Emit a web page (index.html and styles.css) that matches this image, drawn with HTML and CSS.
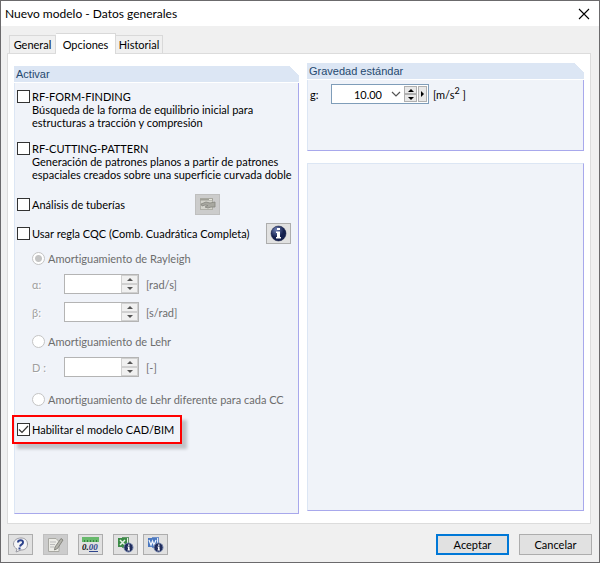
FILE: index.html
```html
<!DOCTYPE html>
<html lang="es">
<head>
    <meta charset="UTF-8">
    <meta name="viewport" content="width=device-width, initial-scale=1.0">
    <title>Nuevo modelo - Datos generales</title>
    <link rel="stylesheet" href="styles.css">
</head>
<body>
    <div class="dialog">
        <!-- Barra de título -->
        <header class="titlebar">
            <h1>Nuevo modelo - Datos generales</h1>
            <button type="button" class="close" aria-label="Cerrar">
                <svg width="12" height="12" viewBox="0 0 12 12"><path d="M1 1 L11 11 M11 1 L1 11" stroke="#000" stroke-width="1.1" fill="none"/></svg>
            </button>
        </header>

        <!-- Pestañas -->
        <nav class="tabs">
            <button type="button" class="tab">General</button>
            <button type="button" class="tab active">Opciones</button>
            <button type="button" class="tab">Historial</button>
        </nav>

        <main class="panel">
            <section class="group left">
                <h2>Activar</h2>
                <div class="group-body">
                    <label class="check">
                        <input type="checkbox">
                        <span>RF-FORM-FINDING<br>Búsqueda de la forma de equilibrio inicial para<br>estructuras a tracción y compresión</span>
                    </label>
                    <label class="check gap-m">
                        <input type="checkbox">
                        <span>RF-CUTTING-PATTERN<br>Generación de patrones planos a partir de patrones<br>espaciales creados sobre una superficie curvada doble</span>
                    </label>
                    <div class="option gap-m">
                        <label class="check"><input type="checkbox"><span>Análisis de tuberías</span></label>
                        <button type="button" class="icon-btn pipes" disabled aria-label="Editar tuberías">
                            <svg width="17" height="15" viewBox="0 0 17 15">
                                <rect x="1.5" y="1.5" width="12" height="11" fill="#d4d4cc" stroke="#b0b0a8"/>
                                <path d="M1 2.5H14" stroke="#a0a098" stroke-width="2"/>
                                <path d="M10 2.5H13" stroke="#e4e4dc"/>
                                <path d="M2 7 L7 5 L11 6 L16 5 V10 L12 10 L9 11 L6 10 L9 8.5 L6 8 L3 9 Z" fill="#a8a8a0" stroke="#85857d" stroke-width=".8"/>
                            </svg>
                        </button>
                    </div>
                    <div class="option gap-s">
                        <label class="check"><input type="checkbox"><span>Usar regla CQC (Comb. Cuadrática Completa)</span></label>
                        <button type="button" class="icon-btn" aria-label="Información">
                            <svg width="17" height="17" viewBox="0 0 17 17">
                                <defs><radialGradient id="ball" cx="35%" cy="25%"><stop offset="0" stop-color="#6f80b4"/><stop offset="1" stop-color="#14204f"/></radialGradient></defs>
                                <circle cx="8.5" cy="8.5" r="7.5" fill="url(#ball)" stroke="#0c143a" stroke-width=".5"/>
                                <path d="M7 3h3v2H7z M6 6.5h4V12h1v1.5H6V12h1V8H6z" fill="#fff"/>
                            </svg>
                        </button>
                    </div>

                    <!-- Amortiguamiento -->
                    <div class="damping">
                        <label class="radio gap-s"><input type="radio" name="damping" checked disabled><span>Amortiguamiento de Rayleigh</span></label>
                        <div class="field gap-s">
                            <label for="alpha">α:</label>
                            <span class="spin">
                                <input type="text" id="alpha" disabled>
                                <span class="arrows"><button type="button" class="up" disabled aria-label="Más"></button><button type="button" class="down" disabled aria-label="Menos"></button></span>
                            </span>
                            <span class="unit">[rad/s]</span>
                        </div>
                        <div class="field gap-s">
                            <label for="beta">β:</label>
                            <span class="spin">
                                <input type="text" id="beta" disabled>
                                <span class="arrows"><button type="button" class="up" disabled aria-label="Más"></button><button type="button" class="down" disabled aria-label="Menos"></button></span>
                            </span>
                            <span class="unit">[s/rad]</span>
                        </div>
                        <label class="radio gap-m"><input type="radio" name="damping" disabled><span>Amortiguamiento de Lehr</span></label>
                        <div class="field gap-s">
                            <label for="lehr">D :</label>
                            <span class="spin">
                                <input type="text" id="lehr" disabled>
                                <span class="arrows"><button type="button" class="up" disabled aria-label="Más"></button><button type="button" class="down" disabled aria-label="Menos"></button></span>
                            </span>
                            <span class="unit">[-]</span>
                        </div>
                        <label class="radio gap-l"><input type="radio" name="damping" disabled><span>Amortiguamiento de Lehr diferente para cada CC</span></label>
                    </div>

                    <label class="check highlight gap-l"><input type="checkbox" checked><span>Habilitar el modelo CAD/BIM</span></label>
                </div>
            </section>

            <div class="right">
                <section class="group gravity">
                    <h2>Gravedad estándar</h2>
                    <div class="group-body">
                        <label for="gravity">g:</label>
                        <span class="combo">
                            <input type="text" id="gravity" value="10.00">
                            <button type="button" class="drop" aria-label="Lista">
                                <svg width="10" height="6" viewBox="0 0 10 6"><path d="M1 1 L5 5 L9 1" stroke="#555" stroke-width="1.2" fill="none"/></svg>
                            </button>
                            <span class="arrows"><button type="button" class="up" aria-label="Más"></button><button type="button" class="down" aria-label="Menos"></button></span>
                            <button type="button" class="next" aria-label="Siguiente"></button>
                        </span>
                        <span>[m/s<sup>2</sup> ]</span>
                    </div>
                </section>
                <section class="group empty"></section>
            </div>
        </main>

        <!-- Barra inferior -->
        <footer class="footer">
            <button type="button" class="icon-btn help" aria-label="Ayuda">
                <svg width="17" height="16" viewBox="0 0 17 16">
                    <path d="M9 1 C13 1 15.5 3.5 15.5 7 C15.5 11 13 13 9 13 L4 15 L5 12 C3 11 1.5 9.5 1.5 7 C1.5 3.5 5 1 9 1Z" fill="#f4f4f6" stroke="#9a9aa2"/>
                    <path d="M6 5.5 C6 2.5 11.5 2.5 11 5.5 C11 7.5 8.5 7 8 9.5 M7.5 10.5V12.5" stroke="#2c428c" stroke-width="2" fill="none"/>
                </svg>
            </button>
            <button type="button" class="icon-btn edit" disabled aria-label="Comentario">
                <svg width="17" height="16" viewBox="0 0 17 16">
                    <path d="M1.5 1.5H9L12 4.5V14.5H1.5Z" fill="#ecece6" stroke="#a8a8a2"/>
                    <path d="M3 5H9M3 7.5H8M3 10H7" stroke="#bbb"/>
                    <path d="M14 1.5L16 3L10.5 11.5L7.5 13L8 10Z" fill="#b4b4ac" stroke="#777770" stroke-width=".8"/>
                </svg>
            </button>
            <button type="button" class="icon-btn units" aria-label="Unidades">
                <svg width="17" height="17" viewBox="0 0 17 17">
                    <path d="M0 1H17V6H0Z" fill="#68b96c"/>
                    <path d="M2.5 4V6M5.5 4V6M8.5 4V6M11.5 4V6M14.5 4V6" stroke="#378440"/>
                    <text x="0" y="14" class="digits">0.<tspan class="blue">00</tspan></text>
                    <path d="M7 15.5H16" stroke="#2f458c"/>
                </svg>
            </button>
            <button type="button" class="icon-btn excel" aria-label="Exportar a Excel">
                <svg width="17" height="17" viewBox="0 0 17 17">
                    <rect x="5.5" y="1.5" width="6" height="10" fill="#e9f1e6" stroke="#62986a"/>
                    <rect x="1" y="2" width="9" height="9" fill="#3c8b47"/>
                    <path d="M3 4L8 9M8 4L3 9" stroke="#e6f4e6" stroke-width="1.5"/>
                    <circle cx="11.5" cy="11.5" r="4.5" fill="#202c5c" stroke="#7080a8"/>
                    <path d="M11 8.5h1.5v1.2h-1.5z M10.500 10.5h2v3h.5v1h-2.500v-1h.5v-2h-.5z" fill="#fff"/>
                </svg>
            </button>
            <button type="button" class="icon-btn word" aria-label="Exportar a Word">
                <svg width="17" height="17" viewBox="0 0 17 17">
                    <rect x="5.5" y="1.5" width="6" height="10" fill="#e5ecf8" stroke="#7090c8"/>
                    <rect x="1" y="2" width="9" height="9" fill="#4a78c0"/>
                    <path d="M2 4L4 9L5.5 5L7 9L9 4" stroke="#f0f4fc" stroke-width="1.2" fill="none"/>
                    <circle cx="11.5" cy="11.5" r="4.5" fill="#202c5c" stroke="#7080a8"/>
                    <path d="M11 8.5h1.5v1.2h-1.5z M10.500 10.5h2v3h.5v1h-2.500v-1h.5v-2h-.5z" fill="#fff"/>
                </svg>
            </button>
            <button type="button" class="btn primary">Aceptar</button>
            <button type="button" class="btn">Cancelar</button>
        </footer>
    </div>
</body>
</html>
```
FILE: styles.css
```css
* {
    box-sizing: border-box;
}
body {
    margin: 0;
    font-family: Lato, "Liberation Sans", sans-serif;
    font-size: 11px;
    line-height: 13px;
    font-variant-ligatures: none;
    color: #000;
}
button, input {
    font: inherit;
    color: inherit;
    margin: 0;
    padding: 0;
}
h1, h2 {
    margin: 0;
    font-weight: normal;
}
svg {
    display: block;
}
.dialog {
    display: flex;
    flex-direction: column;
    min-height: 100vh;
    background: #f0f0f0;
    border: 1px solid #6b6a6c;
}
.titlebar {
    display: flex;
    justify-content: space-between;
    align-items: center;
    height: 25px;
    padding: 0 9px 0 4px;
    background: #fff;
}
.titlebar h1 {
    font-size: 12px;
    line-height: 16px;
}
.close {
    border: none;
    background: none;
}

/* Pestañas */
.tabs {
    display: flex;
    align-items: flex-end;
    margin: 7px 8px 0;
}
.tab {
    height: 18px;
    min-width: 47px;
    border: 1px solid #d9d9d9;
    border-bottom: none;
    background: #f0f0f0;
}
.tab + .tab {
    border-left: none;
}
.tab.active {
    position: relative;
    height: 21px;
    min-width: 60px;
    margin-bottom: -1px;
    background: #fff;
}
.panel {
    flex: 1;
    display: grid;
    grid-template-columns: minmax(0, 285fr) minmax(0, 277fr);
    gap: 8px;
    margin: 0 8px 0 6px;
    padding: 9px 6px;
    border: 1px solid #dcdcdc;
    background: #fff;
}
.left {
    margin-top: 3px;
}
.right {
    display: flex;
    flex-direction: column;
    gap: 12px;
    margin-bottom: 3px;
}

/* Grupos */
.group {
    display: flex;
    flex-direction: column;
}
.group h2 {
    height: 16px;
    padding: 0 2px;
    font-family: "Liberation Sans", Arial, sans-serif;
    font-size: 11px;
    line-height: 16px;
    color: #25496f;
    background: linear-gradient(225deg, #fff 7px, #dce6f4 7px);
}
.group-body {
    flex: 1;
    margin-top: 1px;
    padding: 7px 0 0 2px;
    background: #f0f3f9;
    border: 1px solid #a8a8ec;
    border-top: none;
    border-left-color: #dce6f4;
}
.gravity {
    height: 88px;
}
.gravity .group-body {
    display: flex;
    align-items: center;
    align-content: flex-start;
    flex-wrap: wrap;
    gap: 4px;
    padding-top: 4px;
}
.gravity label {
    width: 17px;
}
.empty {
    flex: 1;
    background: #f0f3f9;
    border: 1px solid #a8a8ec;
    border-top-color: #dce6f4;
    border-left-color: #dce6f4;
}
sup {
    font-size: 9px;
    line-height: 0;
}

/* Casillas y opciones */
.check, .radio {
    display: flex;
    align-items: flex-start;
    gap: 2px;
    white-space: nowrap;
}
.check input {
    appearance: none;
    flex: none;
    width: 13px;
    height: 13px;
    border: 1px solid #333;
    background: #fff;
}
.check input:checked {
    background: #fff url("data:image/svg+xml,%3Csvg xmlns='http://www.w3.org/2000/svg' viewBox='0 0 11 11'%3E%3Cpath d='M1 5.5L4 8.5L10 2' fill='none' stroke='%23333' stroke-width='1.2'/%3E%3C/svg%3E");
}
.radio {
    gap: 3px;
    line-height: 14px;
    color: #6d6d6d;
}
.radio input {
    appearance: none;
    width: 13px;
    height: 13px;
    border: 1px solid #c4c4c4;
    border-radius: 50%;
    background: #fff;
}
.radio input:checked {
    background: radial-gradient(#c4c4c4 3px, #fff 4px);
}
.option {
    display: flex;
    align-items: center;
    justify-content: space-between;
    padding-right: 7px;
}
.pipes {
    margin-right: 71px;
}
.damping {
    padding-left: 15px;
}
.gap-s {
    margin-top: 8px;
}
.gap-m {
    margin-top: 13px;
}
.gap-l {
    margin-top: 16px;
}
.highlight {
    position: relative;
    width: 150px;
}
.highlight::after {
    content: "";
    position: absolute;
    inset: -8px -15px -8px -5px;
    border: 2px solid #f00;
    box-shadow: 5px 5px 3px rgba(0, 0, 0, 0.2);
}

/* Campos numéricos */
.field {
    display: flex;
    align-items: center;
    color: #6d6d6d;
}
.field label {
    width: 32px;
    color: #a0a0a0;
    text-shadow: 1px 1px #fff;
}
.unit {
    margin-left: 7px;
}
.spin, .combo {
    display: flex;
    height: 20px;
    border: 1px solid #b4b4b4;
    background: #fff;
}
.spin {
    width: 75px;
}
.spin input, .combo input {
    flex: 1;
    min-width: 0;
    border: none;
    background: none;
}
.arrows {
    display: flex;
    flex-direction: column;
    width: 17px;
}
.up, .down, .next {
    display: flex;
    flex: 1;
    align-items: center;
    justify-content: center;
    border: 1px solid #d0d0d0;
    background: #f0f0f0;
}
.up::before, .down::before, .next::before {
    content: "";
    border: 3px solid transparent;
}
.up::before {
    border-top: none;
    border-bottom-color: #555;
}
.down::before {
    border-bottom: none;
    border-top-color: #555;
}
.combo {
    width: 98px;
    border-color: #7f9db9;
    padding: 1px;
}
.combo input {
    text-align: right;
}
.combo .arrows {
    width: 13px;
}
.combo .up, .combo .down, .combo .next {
    border-color: #b0b0b0;
    background: #e8e8e8;
}
.combo .up::before {
    border-bottom-color: #000;
}
.combo .down::before {
    border-top-color: #000;
}
.combo .next {
    flex: none;
    width: 9px;
    margin-left: 1px;
}
.next::before {
    border-right: none;
    border-left-color: #000;
}
.drop {
    padding: 0 3px 0 9px;
    border: none;
    background: none;
}

/* Botones */
.icon-btn {
    display: flex;
    align-items: center;
    justify-content: center;
    flex: none;
    width: 25px;
    height: 21px;
    border: 1px solid #adadad;
    background: #e1e1e1;
}
.icon-btn:disabled {
    border-color: #bfbfbf;
    background: #ccc;
}
.footer {
    display: flex;
    align-items: center;
    padding: 10px 7px 7px;
}
.help, .edit, .units {
    margin-right: 10px;
}
.excel {
    margin-right: 5px;
}
.word {
    margin-right: auto;
}
.digits {
    font: italic bold 9px "Liberation Serif", serif;
    fill: #111;
}
.blue {
    fill: #2f458c;
}
.btn {
    width: 73px;
    height: 21px;
    margin-left: 10px;
    border: 1px solid #adadad;
    background: #e1e1e1;
}
.btn.primary {
    border: 2px solid #0078d7;
}
```
